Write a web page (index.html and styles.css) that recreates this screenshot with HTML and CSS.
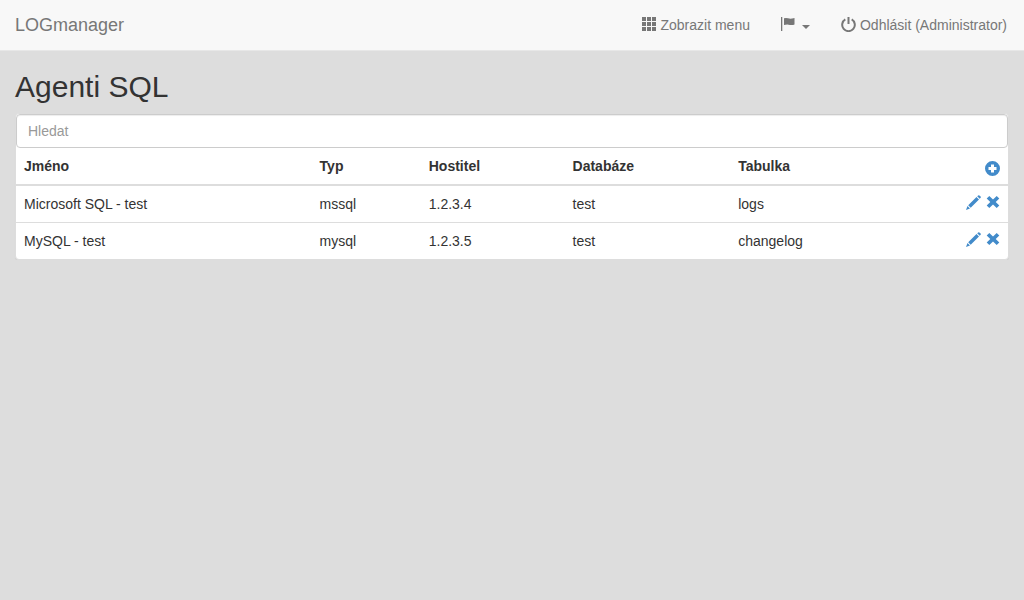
FILE: index.html
```html
<!DOCTYPE html>
<html lang="cs">
<head>
<meta charset="utf-8">
<meta name="viewport" content="width=device-width, initial-scale=1">
<title>LOGmanager</title>
<link rel="stylesheet" href="styles.css">
</head>
<body>
<svg class="sprite" aria-hidden="true">
  <symbol id="pencil" viewBox="0 0 15 15"><path d="M11.200 1.300l1-.9q.6-.5 1.200 0l1.200 1.200q.5.600 0 1.200l-.9 1zM10.500 2l2.500 2.500-8.300 8.300-2.500-2.500zM1.500 11l2.500 2.500-4 1.500z"/></symbol>
  <symbol id="remove" viewBox="0 0 14 14"><path d="M3.300.9L7 4.500 10.700.9l2.600 2.500L9.700 7l3.600 3.600-2.600 2.500L7 9.500l-3.700 3.600-2.600-2.500L4.300 7 .7 3.400z"/></symbol>
  <symbol id="plus" viewBox="0 0 15 15"><path fill-rule="evenodd" d="M7.500 0a7.500 7.500 0 1 0 0 15a7.500 7.500 0 1 0 0-15zM6 3.500h3V6h2.500v3H9v2.500H6V9H3.500V6H6z"/></symbol>
</svg>

<header class="navbar">
  <a class="brand" href="#">LOGmanager</a>
  <nav class="nav">
    <a class="nav-item" href="#"><svg class="icon" viewBox="0 0 14 14"><path d="M0 0h4v4H0zM5 0h4v4H5zM10 0h4v4h-4zM0 5h4v4H0zM5 5h4v4H5zM10 5h4v4h-4zM0 10h4v4H0zM5 10h4v4H5zM10 10h4v4h-4z"/></svg>Zobrazit menu</a>
    <button class="nav-item" type="button" aria-label="Jazyk"><svg class="icon" viewBox="0 0 14 14"><path d="M0 0h1.300v14H0zM3 1.300q2-.7 4 0t4 .3q1.500-.6 2.500-.6v6.500q-2 .8-4.500.400-3-.6-6 .1z"/></svg><span class="caret"></span></button>
    <a class="nav-item" href="#"><svg class="icon icon-power" viewBox="0 0 15 15"><path d="M6.500 0h2v7h-2z"/><path class="ring" d="M4.300 2.400a6.300 6.300 0 1 0 6.400 0"/></svg>Odhlásit (Administrator)</a>
  </nav>
</header>

<main class="content">
  <h1 class="title">Agenti SQL</h1>
  <section class="panel">
    <input class="search" type="text" placeholder="Hledat" aria-label="Hledat">
    <table class="table">
      <thead>
        <tr>
          <th class="col-name">Jméno</th>
          <th class="col-type">Typ</th>
          <th class="col-host">Hostitel</th>
          <th class="col-database">Databáze</th>
          <th class="col-table">Tabulka</th>
          <th><div class="actions actions-head"><button class="action" type="button" aria-label="Přidat"><svg class="icon icon-plus"><use href="#plus"/></svg></button></div></th>
        </tr>
      </thead>
      <tbody>
        <tr>
          <td>Microsoft SQL - test</td><td>mssql</td><td>1.2.3.4</td><td>test</td><td>logs</td>
          <td><div class="actions"><button class="action" type="button" aria-label="Upravit"><svg class="icon icon-pencil"><use href="#pencil"/></svg></button><button class="action" type="button" aria-label="Odstranit"><svg class="icon"><use href="#remove"/></svg></button></div></td>
        </tr>
        <tr>
          <td>MySQL - test</td><td>mysql</td><td>1.2.3.5</td><td>test</td><td>changelog</td>
          <td><div class="actions"><button class="action" type="button" aria-label="Upravit"><svg class="icon icon-pencil"><use href="#pencil"/></svg></button><button class="action" type="button" aria-label="Odstranit"><svg class="icon"><use href="#remove"/></svg></button></div></td>
        </tr>
      </tbody>
    </table>
  </section>
</main>
</body>
</html>
```

FILE: styles.css
```css
* {
  box-sizing: border-box;
}

body {
  margin: 0;
  background: #ddd;
  color: #333;
  font: 14px/20px "Liberation Sans", Arial, sans-serif;
}

.sprite {
  display: none;
}

.navbar {
  display: flex;
  justify-content: space-between;
  padding: 0 17px 0 15px;
  background: #f8f8f8;
  border-bottom: 1px solid #e7e7e7;
}

.brand {
  padding: 15px 0;
  color: #777;
  font-size: 18px;
  text-decoration: none;
}

.nav {
  display: flex;
  gap: 31px;
}

.nav-item {
  display: flex;
  align-items: center;
  gap: 4px;
  padding: 15px 0;
  border: 0;
  background: none;
  color: #777;
  font: inherit;
  text-decoration: none;
  cursor: pointer;
}

.icon {
  display: block;
  flex: none;
  width: 14px;
  height: 14px;
  margin-bottom: 2px;
  fill: currentColor;
}

.icon-power,
.icon-plus,
.icon-pencil {
  width: 15px;
  height: 15px;
}

.icon-plus {
  margin-bottom: 0;
}

.ring {
  fill: none;
  stroke: currentColor;
  stroke-width: 2;
}

.caret {
  margin: 4px 0 0 3px;
  border-top: 4px solid currentColor;
  border-right: 4px solid transparent;
  border-left: 4px solid transparent;
}

.content {
  padding: 0 15px;
}

.title {
  margin: 19px 0 10px;
  font-size: 30px;
  font-weight: 400;
  line-height: 33px;
}

.panel {
  background: #fff;
  border: 1px solid #ddd;
  border-radius: 4px;
  box-shadow: 0 1px 1px rgba(0, 0, 0, 0.05);
}

.search {
  display: block;
  width: 100%;
  height: 34px;
  padding: 6px 11px;
  border: 1px solid #ccc;
  border-radius: 4px;
  background: #fff;
  box-shadow: inset 0 1px 1px rgba(0, 0, 0, 0.075);
  color: #555;
  font: inherit;
}

.search::placeholder {
  color: #999;
}

.table {
  width: 100%;
  border-collapse: separate;
  border-spacing: 0;
}

.table th,
.table td {
  padding: 8px;
  text-align: left;
  vertical-align: top;
}

.table th {
  border-bottom: 2px solid #ddd;
}

.table tr + tr td {
  border-top: 1px solid #ddd;
}

.col-name {
  width: 29.8%;
}

.col-type {
  width: 11%;
}

.col-host {
  width: 14.5%;
}

.col-database {
  width: 16.7%;
}

.actions {
  display: flex;
  justify-content: flex-end;
  align-items: center;
  gap: 5px;
  height: 20px;
  padding-bottom: 2px;
}

.actions-head {
  align-items: flex-end;
  padding-bottom: 0;
}

.action {
  padding: 0;
  border: 0;
  background: none;
  color: #428bca;
  cursor: pointer;
}
```
